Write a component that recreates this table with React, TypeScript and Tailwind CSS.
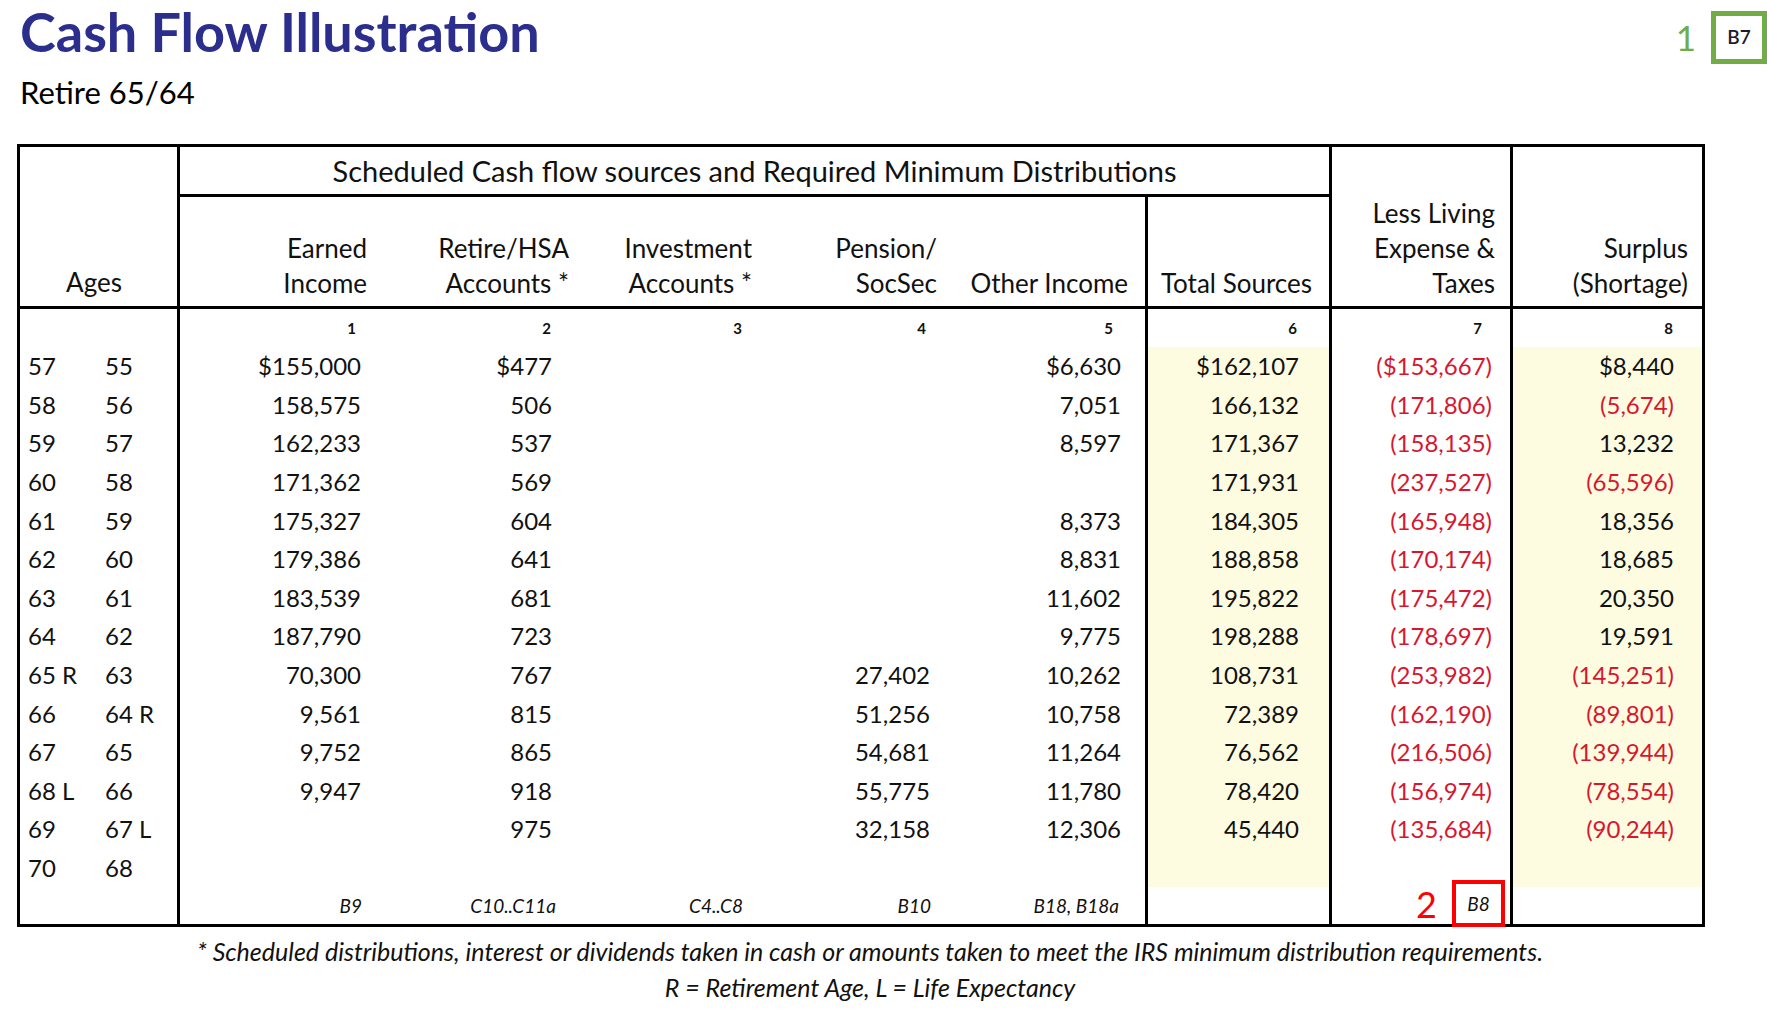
const ROWS: string[][] = [
  ["57", "55", "$155,000", "$477", "", "", "$6,630", "$162,107", "($153,667)", "$8,440"],
  ["58", "56", "158,575", "506", "", "", "7,051", "166,132", "(171,806)", "(5,674)"],
  ["59", "57", "162,233", "537", "", "", "8,597", "171,367", "(158,135)", "13,232"],
  ["60", "58", "171,362", "569", "", "", "", "171,931", "(237,527)", "(65,596)"],
  ["61", "59", "175,327", "604", "", "", "8,373", "184,305", "(165,948)", "18,356"],
  ["62", "60", "179,386", "641", "", "", "8,831", "188,858", "(170,174)", "18,685"],
  ["63", "61", "183,539", "681", "", "", "11,602", "195,822", "(175,472)", "20,350"],
  ["64", "62", "187,790", "723", "", "", "9,775", "198,288", "(178,697)", "19,591"],
  ["65 R", "63", "70,300", "767", "", "27,402", "10,262", "108,731", "(253,982)", "(145,251)"],
  ["66", "64 R", "9,561", "815", "", "51,256", "10,758", "72,389", "(162,190)", "(89,801)"],
  ["67", "65", "9,752", "865", "", "54,681", "11,264", "76,562", "(216,506)", "(139,944)"],
  ["68 L", "66", "9,947", "918", "", "55,775", "11,780", "78,420", "(156,974)", "(78,554)"],
  ["69", "67 L", "", "975", "", "32,158", "12,306", "45,440", "(135,684)", "(90,244)"],
  ["70", "68", "", "", "", "", "", "", "", ""],
];

const GRID = "grid grid-cols-[157px_192px_191px_190px_188px_207px_184px_181px_192px]";

// right padding per value column so the numbers line up like the sheet
const PAD = ["pr-[8px]", "pr-[8px]", "pr-[8px]", "pr-[8px]", "pr-[24px]", "pr-[30px]", "pr-[18px]", "pr-[28px]"];
const IDX_PAD = ["pr-[13px]", "pr-[9px]", "pr-[8px]", "pr-[12px]", "pr-[32px]", "pr-[32px]", "pr-[28px]", "pr-[29px]"];
const DIVIDER = [true, false, false, false, false, true, true, true];
const SHADED = [false, false, false, false, false, true, false, true];
const REFS = ["B9", "C10..C11a", "C4..C8", "B10", "B18, B18a", "", "", ""];
const REF_PAD = ["pr-[7px]", "pr-[4px]", "pr-[7px]", "pr-[7px]", "pr-[26px]", "", "", ""];

function valueClass(i: number) {
  return `flex items-center justify-end ${PAD[i]} ${DIVIDER[i] ? "border-l-[3px] border-black" : ""} ${
    SHADED[i] ? "bg-[#fdfbe0]" : ""
  }`;
}

export default function App() {
  return (
    <div className="min-h-[1033px] w-[1767px] bg-white font-[Lato,sans-serif] text-[#111]">
      <div className="flex items-start justify-between">
        <div className="pl-[20px]">
          <h1 className="pt-[5px] text-[54px] font-bold leading-none text-[#2b2e8c]">Cash Flow Illustration</h1>
          <p className="mt-[18px] text-[31px] leading-none text-black">Retire 65/64</p>
        </div>
        <div className="flex items-center gap-[15px] pt-[11px]">
          <span className="text-[35px] leading-none text-[#70ad47]">1</span>
          <div className="flex h-[53px] w-[56px] items-center justify-center border-[5px] border-[#70ad47] text-[19px] font-semibold text-[#1c1c2e]">
            B7
          </div>
        </div>
      </div>

      <div className="ml-[17px] mt-[36px] w-[1688px] border-[3px] border-black">
        {/* header */}
        <div className={`${GRID} grid-rows-[50px_109px] border-b-[3px] border-black text-[26px] leading-[35px]`}>
          <div className="row-span-2 flex items-end justify-center pb-[6px] pr-[9px]">Ages</div>
          <div className="col-span-6 flex items-center justify-center border-b-[3px] border-l-[3px] border-black text-[29px]">
            Scheduled Cash flow sources and Required Minimum Distributions
          </div>
          <div className="row-span-2 flex items-end justify-end border-l-[3px] border-black pb-[5px] pr-[15px] text-right">
            Less Living
            <br />
            Expense &amp;
            <br />
            Taxes
          </div>
          <div className="row-span-2 flex items-end justify-end border-l-[3px] border-black pb-[5px] pr-[14px] text-right">
            Surplus
            <br />
            (Shortage)
          </div>
          <div className="flex items-end justify-end border-l-[3px] border-black pb-[5px] pr-[2px] text-right">
            Earned
            <br />
            Income
          </div>
          <div className="-mr-[9px] flex items-end justify-end pb-[5px] text-right">
            Retire/HSA
            <br />
            Accounts *
          </div>
          <div className="-mr-[2px] flex items-end justify-end pb-[5px] text-right">
            Investment
            <br />
            Accounts *
          </div>
          <div className="flex items-end justify-end pb-[5px] pr-[1px] text-right">
            Pension/
            <br />
            SocSec
          </div>
          <div className="flex items-end justify-end pb-[5px] pr-[17px] text-right">Other Income</div>
          <div className="flex items-end justify-end border-l-[3px] border-black pb-[5px] pr-[17px] text-right">
            Total Sources
          </div>
        </div>

        {/* column index row */}
        <div className={`${GRID} h-[38px] text-[15px] font-bold`}>
          <div />
          {IDX_PAD.map((p, i) => (
            <div
              key={i}
              className={`flex items-center justify-end ${p} ${DIVIDER[i] ? "border-l-[3px] border-black" : ""}`}
            >
              {i + 1}
            </div>
          ))}
        </div>

        {/* data rows */}
        {ROWS.map((row) => (
          <div key={row[0]} className={`${GRID} h-[38.6px] text-[24px]`}>
            <div className="flex items-center pl-[8px]">
              <span className="w-[77px]">{row[0]}</span>
              <span>{row[1]}</span>
            </div>
            {row.slice(2).map((v, i) => (
              <div key={i} className={`${valueClass(i)} ${v.startsWith("(") ? "text-[#d7172f]" : ""}`}>
                {v}
              </div>
            ))}
          </div>
        ))}

        {/* cell references */}
        <div className={`${GRID} h-[37px] text-[19px] italic`}>
          <div />
          {REFS.map((r, i) => (
            <div
              key={i}
              className={`relative flex items-center justify-end ${REF_PAD[i]} ${
                DIVIDER[i] ? "border-l-[3px] border-black" : ""
              }`}
            >
              {r}
              {i === 6 ? (
                <div className="absolute right-[5px] top-[-7px] flex items-center gap-[15px]">
                  <span className="text-[36px] not-italic leading-none text-[#ff0000]">2</span>
                  <div className="flex h-[47px] w-[53px] items-center justify-center border-[4px] border-[#ff0000] bg-white text-[19px]">
                    B8
                  </div>
                </div>
              ) : null}
            </div>
          ))}
        </div>
      </div>

      <div className="w-[1740px] pt-[6px] text-center text-[25px] italic leading-[36px]">
        <p>* Scheduled distributions, interest or dividends taken in cash or amounts taken to meet the IRS minimum distribution requirements.</p>
        <p>R = Retirement Age, L = Life Expectancy</p>
      </div>
    </div>
  );
}
